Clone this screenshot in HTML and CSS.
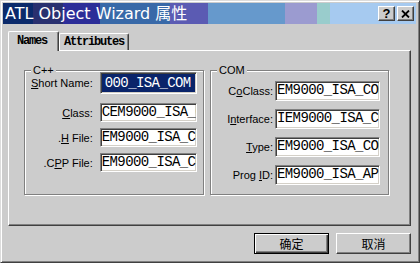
FILE: index.html
```html
<!DOCTYPE html>
<html lang="zh">
<head>
    <meta charset="UTF-8">
    <title>ATL Object Wizard 属性</title>
    <link rel="stylesheet" href="styles.css">
</head>
<body>
    <div class="window">
        <div class="titlebar">
            <span class="title">ATL Object Wizard 属性</span>
            <div class="caption-buttons">
                <button class="cap-btn help">?</button>
                <button class="cap-btn close">
                    <svg width="9" height="8" viewBox="0 0 9 8">
                        <path d="M1 0.5 L8 7.5 M8 0.5 L1 7.5" stroke="#000" stroke-width="1.8" fill="none"/>
                    </svg>
                </button>
            </div>
        </div>

        <div class="content">
            <div class="tabs">
                <div class="tab active">Names</div>
                <div class="tab">Attributes</div>
            </div>

            <div class="panel">
                <fieldset class="group cpp">
                    <legend>C++</legend>
                    <label class="first"><u>S</u>hort Name:</label>
                    <div class="field focused first">000_ISA_COM</div>
                    <label><u>C</u>lass:</label>
                    <div class="field">CEM9000_ISA_COM</div>
                    <label>.<u>H</u> File:</label>
                    <div class="field">EM9000_ISA_COM.h</div>
                    <label>.C<u>P</u>P File:</label>
                    <div class="field">EM9000_ISA_COM.cpp</div>
                </fieldset>

                <fieldset class="group com">
                    <legend>COM</legend>
                    <label>C<u>o</u>Class:</label>
                    <div class="field">EM9000_ISA_COM</div>
                    <label>I<u>n</u>terface:</label>
                    <div class="field">IEM9000_ISA_COM</div>
                    <label><u>T</u>ype:</label>
                    <div class="field">EM9000_ISA_COM Class</div>
                    <label>Prog <u>I</u>D:</label>
                    <div class="field">EM9000_ISA_API.EM9000_ISA_COM.1</div>
                </fieldset>
            </div>

            <div class="actions">
                <button class="btn default">确定</button>
                <button class="btn">取消</button>
            </div>
        </div>
    </div>
</body>
</html>
```

FILE: styles.css
```css
body {
    margin: 0;
    background: #cccccc;
    font-family: "Liberation Sans", Arial, sans-serif;
}
.window {
    width: 420px;
    height: 263px;
    box-sizing: border-box;
    background: #cccccc;
    border: 1px solid;
    border-color: #dcdcdc #404040 #404040 #dcdcdc;
    box-shadow: inset 1px 1px 0 #ffffff, inset -1px -1px 0 #808080;
    padding: 2px 3px 2px 2px;
}
.titlebar {
    height: 21px;
    display: flex;
    align-items: center;
    justify-content: space-between;
    padding: 0 2px 0 2px;
    background: linear-gradient(to right,
        #0b2a6b 0, #0b2a6b 30px,
        #29306f 30px, #29306f 60px,
        #2b2d98 60px, #2b2d98 97px,
        #3869a8 97px, #3869a8 167px,
        #5b5bb3 167px, #5b5bb3 205px,
        #6699cc 205px, #6699cc 282px,
        #9b9bd0 282px, #9b9bd0 314px,
        #99cccc 314px, #99cccc 327px,
        #a6caf0 327px, #a6caf0 100%);
}
.title {
    color: #ffffff;
    font-family: "DejaVu Sans", "Noto Sans CJK SC", sans-serif;
    font-size: 16px;
    line-height: 21px;
    white-space: nowrap;
}
.caption-buttons {
    display: flex;
    gap: 2px;
}
.cap-btn {
    width: 17px;
    height: 15px;
    padding: 0;
    margin: 0;
    display: flex;
    align-items: center;
    justify-content: center;
    background: #cccccc;
    border: 1px solid;
    border-color: #ffffff #404040 #404040 #ffffff;
    box-shadow: inset -1px -1px 0 #808080;
    font-family: "Liberation Sans", Arial, sans-serif;
    font-weight: bold;
    font-size: 13px;
    line-height: 13px;
    color: #000;
}
.content {
    padding-top: 7px;
}
.tabs {
    display: flex;
    align-items: flex-end;
    height: 19px;
    margin-left: 5px;
}
.tab {
    box-sizing: border-box;
    height: 17px;
    width: 70px;
    border-top: 1px solid #ffffff;
    border-left: 1px solid #ffffff;
    border-right: 1px solid #404040;
    box-shadow: inset -1px 0 0 #808080;
    border-radius: 2px 2px 0 0;
    background: #cccccc;
    font-family: "Liberation Mono", "Courier New", monospace;
    font-weight: bold;
    font-size: 12px;
    letter-spacing: -1.2px;
    line-height: 16px;
    padding-left: 4px;
    white-space: nowrap;
}
.tab.active {
    position: relative;
    width: 51px;
    height: 20px;
    margin-bottom: -1px;
    padding-left: 8px;
    line-height: 18px;
    z-index: 1;
}
.panel {
    height: 176px;
    box-sizing: border-box;
    margin: 0 5px;
    border: 1px solid;
    border-color: #ffffff #404040 #404040 #ffffff;
    box-shadow: inset -1px -1px 0 #808080;
    padding: 13px 0 0 15px;
    display: flex;
    align-items: flex-start;
    gap: 6px;
}
.group {
    margin: 0;
    min-inline-size: 0;
    box-sizing: border-box;
    height: 131px;
    border: 1px solid #808080;
    box-shadow: inset 1px 1px 0 #ffffff, 1px 1px 0 #ffffff;
    display: grid;
    align-content: start;
    align-items: center;
    font-size: 11px;
}
.group legend {
    padding: 0 2px;
    font-size: 11px;
    line-height: 13px;
    background: #cccccc;
}
.group label {
    text-align: right;
    white-space: nowrap;
    color: #000;
}
.cpp {
    width: 180px;
    padding: 1px 7px 0 6px;
    grid-template-columns: 1fr 97px;
    grid-auto-rows: 19px;
    column-gap: 7px;
    row-gap: 6px;
}
.cpp .first {
    height: 22px;
    margin-bottom: 9px;
    line-height: 22px;
}
.com {
    width: 179px;
    padding: 4px 8px 0 6px;
    grid-template-columns: 1fr 105px;
    grid-auto-rows: 20px;
    column-gap: 2px;
    row-gap: 8px;
}
.field {
    box-sizing: border-box;
    height: 100%;
    background: #ffffff;
    border: 1px solid;
    border-color: #808080 #ffffff #ffffff #808080;
    box-shadow: inset 1px 1px 0 #404040, inset -1px -1px 0 #d4d0c8;
    padding-left: 1px;
    overflow: hidden;
    white-space: nowrap;
    font-family: "Liberation Mono", "Courier New", monospace;
    font-size: 14px;
    letter-spacing: -0.6px;
    line-height: 17px;
    color: #000;
}
.field.focused {
    background: #0a246a;
    color: #ffffff;
    padding-left: 4px;
    line-height: 20px;
    box-shadow: inset 1px 1px 0 #404040, inset -1px -1px 0 #d4d0c8;
}
.actions {
    display: flex;
    justify-content: flex-end;
    gap: 7px;
    margin-top: 7px;
    padding-right: 5px;
}
.btn {
    width: 75px;
    height: 21px;
    padding: 0;
    background: #cccccc;
    border: 1px solid;
    border-color: #ffffff #404040 #404040 #ffffff;
    box-shadow: inset -1px -1px 0 #808080;
    font-family: "Noto Sans CJK SC", sans-serif;
    font-size: 12px;
    line-height: 17px;
    color: #000;
}
.btn.default {
    border-color: #000;
    box-shadow: inset 1px 1px 0 #ffffff, inset -1px -1px 0 #404040, inset -2px -2px 0 #808080;
}
```
